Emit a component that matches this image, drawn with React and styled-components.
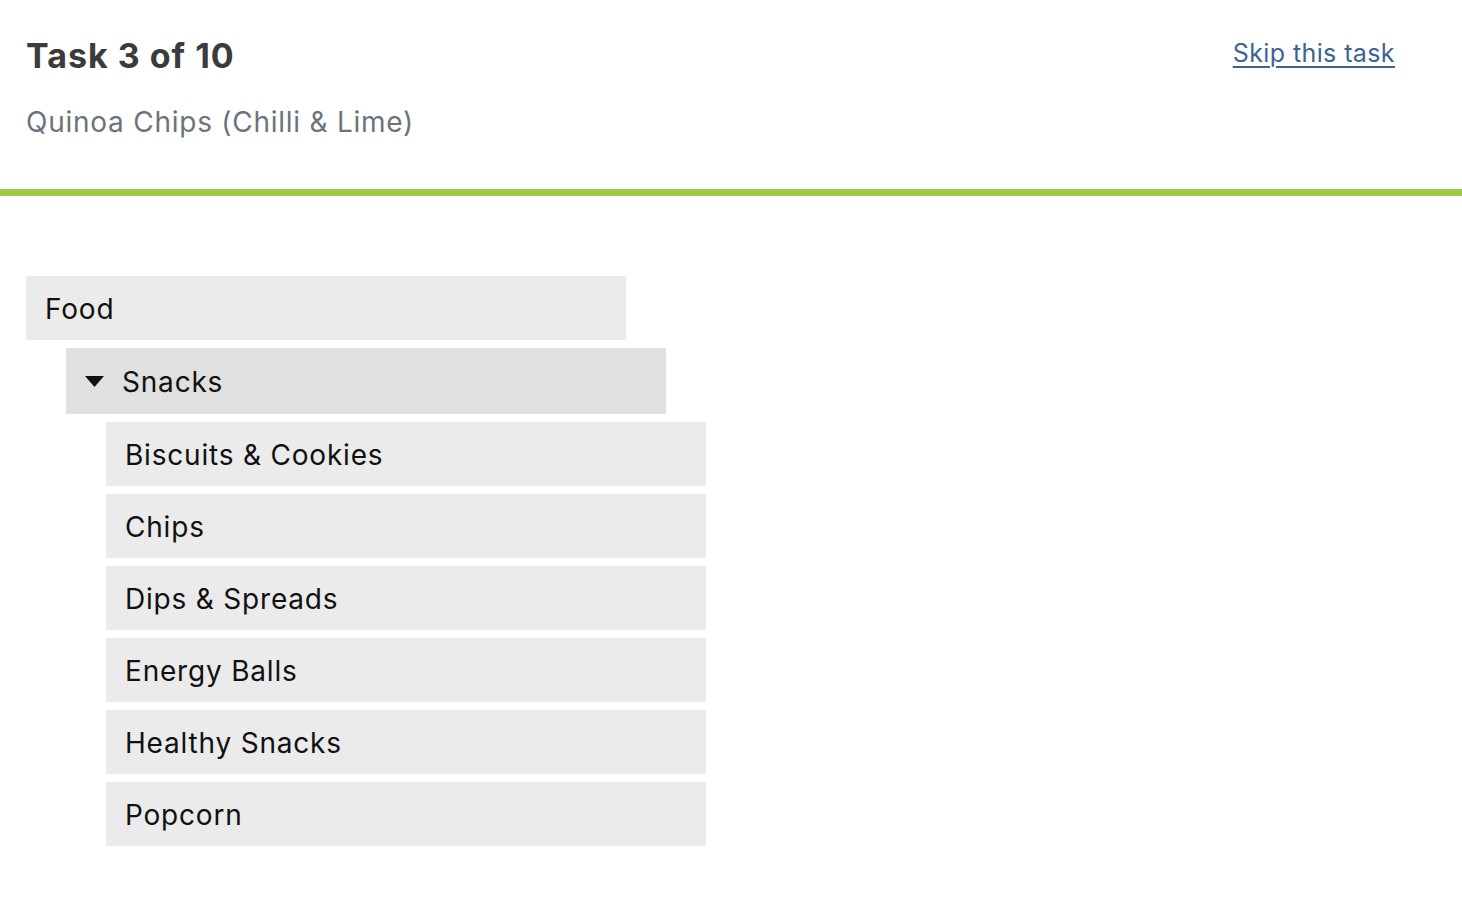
import React from "react";
import styled, { createGlobalStyle } from "styled-components";

const Global = createGlobalStyle`
  html, body { margin: 0; padding: 0; background: #fff; }
  body { font-family: "Inter", "Open Sans", sans-serif; color: #000; }
`;

const Page = styled.div`
  display: flex;
  flex-direction: column;
`;

const Header = styled.header`
  display: flex;
  justify-content: space-between;
  align-items: flex-start;
  padding: 33px 67px 0 26px;
  height: 196px;
  box-sizing: border-box;
  border-bottom: 7px solid #9ec945;
`;

const TitleBlock = styled.div`
  display: flex;
  flex-direction: column;
  gap: 23px;
`;

const Title = styled.h1`
  margin: 0;
  font-size: 34px;
  font-weight: 700;
  letter-spacing: 1px;
  line-height: 46px;
  color: #3b3b3b;
`;

const Subtitle = styled.div`
  font-size: 28px;
  letter-spacing: 0.75px;
  line-height: 40px;
  color: #6b747c;
`;

const SkipLink = styled.a`
  font-size: 25px;
  letter-spacing: 0.4px;
  line-height: 40px;
  color: #3a6592;
  text-decoration: underline;
  text-decoration-thickness: 2px;
  text-underline-offset: 4px;
  cursor: pointer;
`;

const Tree = styled.div`
  display: flex;
  flex-direction: column;
  gap: 8px;
  padding: 80px 0 0 26px;
`;

const Row = styled.div`
  display: flex;
  align-items: center;
  gap: 18px;
  width: 600px;
  height: ${(p) => (p.$open ? 66 : 64)}px;
  margin-left: ${(p) => p.$level * 40}px;
  padding-left: 19px;
  padding-top: 1px;
  box-sizing: border-box;
  background: ${(p) => (p.$open ? "#e0e0e0" : "#ebebeb")};
  font-size: 28px;
  letter-spacing: 0.8px;
  color: #111;
`;

const Caret = styled.svg`
  width: 19px;
  height: 11px;
  flex: none;
`;

const items = [
  "Biscuits & Cookies",
  "Chips",
  "Dips & Spreads",
  "Energy Balls",
  "Healthy Snacks",
  "Popcorn",
];

export default function App() {
  return (
    <Page>
      <Global />
      <Header>
        <TitleBlock>
          <Title>Task 3 of 10</Title>
          <Subtitle>Quinoa Chips (Chilli &amp; Lime)</Subtitle>
        </TitleBlock>
        <SkipLink>Skip this task</SkipLink>
      </Header>
      <Tree>
        <Row $level={0}>Food</Row>
        <Row $level={1} $open>
          <Caret viewBox="0 0 19 11">
            <path d="M0 0 H19 L9.5 11 Z" fill="#111" />
          </Caret>
          Snacks
        </Row>
        {items.map((t) => (
          <Row key={t} $level={2}>
            {t}
          </Row>
        ))}
      </Tree>
    </Page>
  );
}
